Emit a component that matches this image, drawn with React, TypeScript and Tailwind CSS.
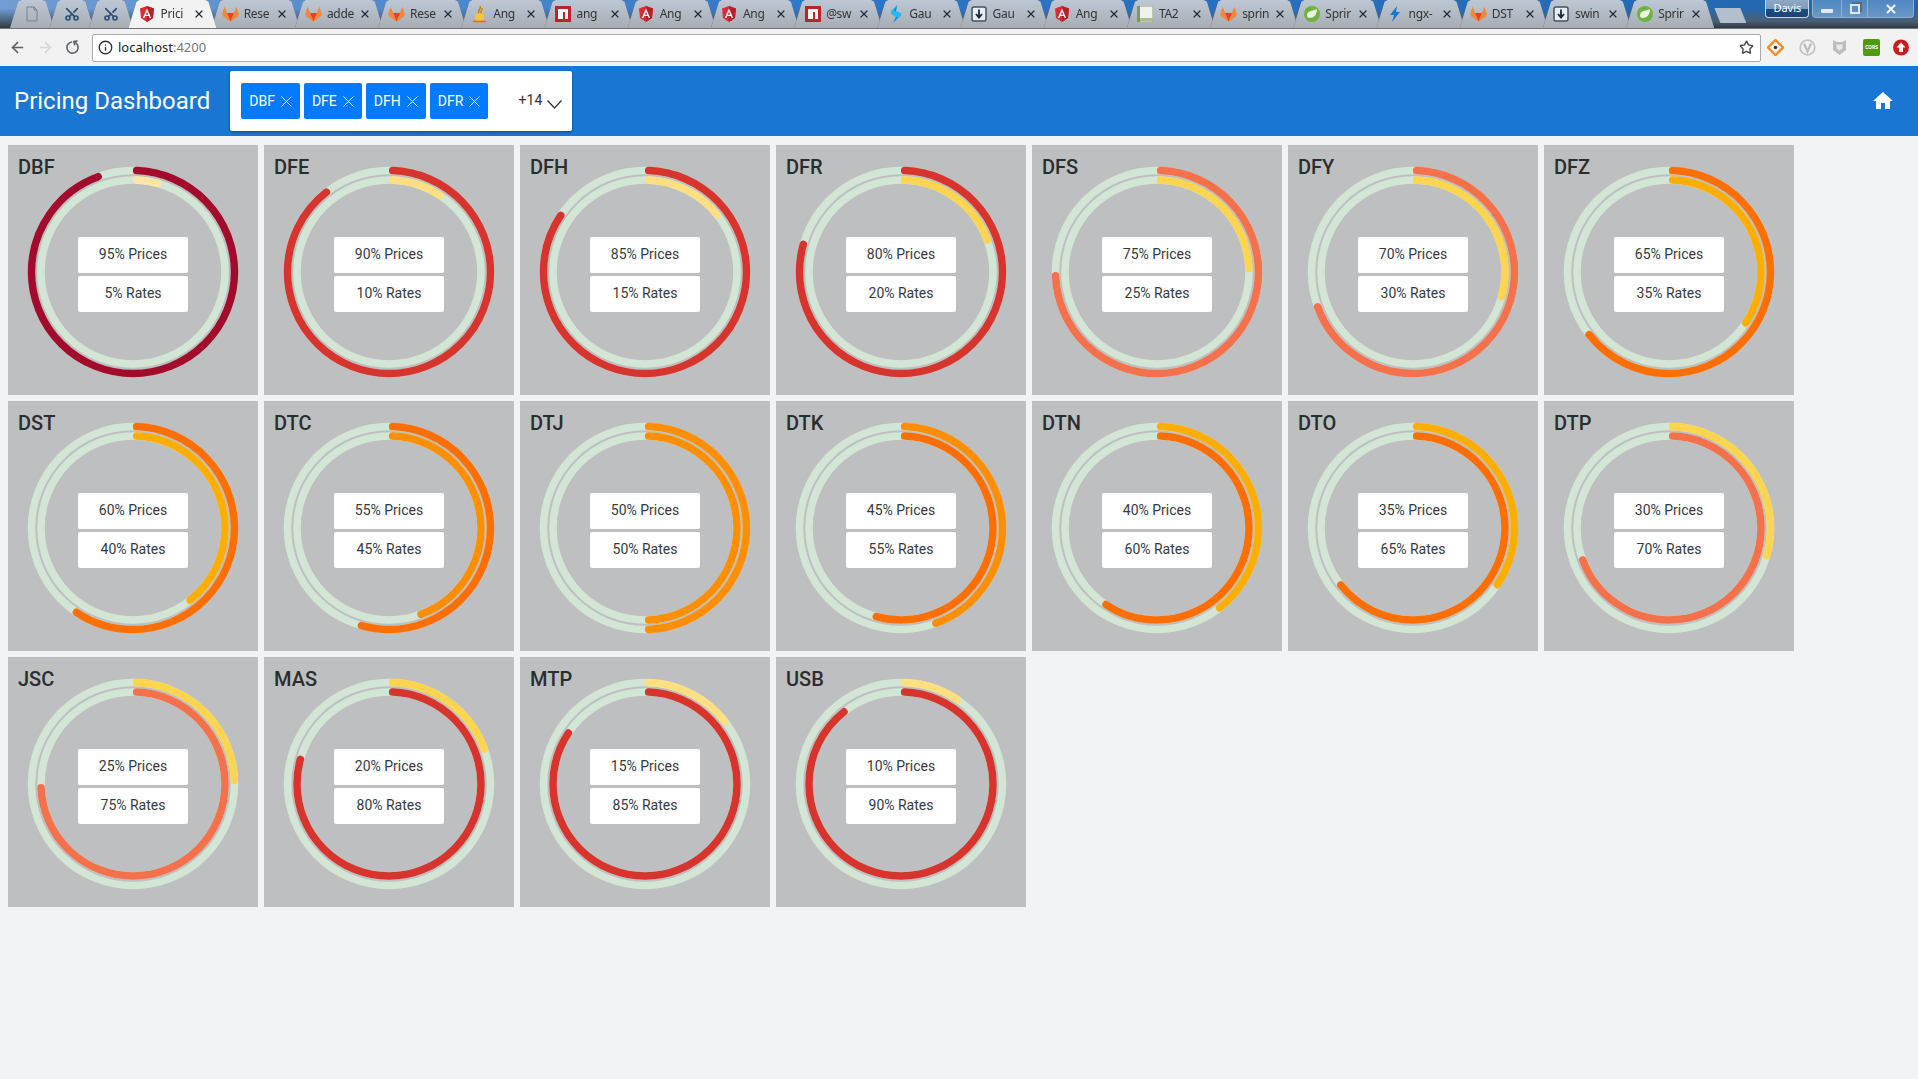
import { Scissors, X, ArrowLeft, ArrowRight, RotateCw, Star, Info } from "lucide-react";

type Gauge = { name: string; prices: number };

const gauges: Gauge[] = [
  { name: "DBF", prices: 95 },
  { name: "DFE", prices: 90 },
  { name: "DFH", prices: 85 },
  { name: "DFR", prices: 80 },
  { name: "DFS", prices: 75 },
  { name: "DFY", prices: 70 },
  { name: "DFZ", prices: 65 },
  { name: "DST", prices: 60 },
  { name: "DTC", prices: 55 },
  { name: "DTJ", prices: 50 },
  { name: "DTK", prices: 45 },
  { name: "DTN", prices: 40 },
  { name: "DTO", prices: 35 },
  { name: "DTP", prices: 30 },
  { name: "JSC", prices: 25 },
  { name: "MAS", prices: 20 },
  { name: "MTP", prices: 15 },
  { name: "USB", prices: 10 },
];

function colorFor(v: number) {
  if (v >= 95) return "#a20b2c";
  if (v >= 80) return "#d6342c";
  if (v >= 70) return "#f4714b";
  if (v >= 55) return "#ff6f00";
  if (v >= 45) return "#ff8f00";
  if (v >= 35) return "#ffae00";
  if (v >= 20) return "#ffd54f";
  if (v >= 10) return "#ffdf80";
  return "#ffe6a6";
}

function Ring({ r, value }: { r: number; value: number }) {
  // the round caps stay inside the arc's own range
  const cap = (3.75 / (2 * Math.PI * r)) * 100;
  return (
    <>
      <circle cx="110" cy="110" r={r} fill="none" stroke="#d3e5d4" strokeWidth="7.5" />
      <circle
        cx="110"
        cy="110"
        r={r}
        fill="none"
        stroke={colorFor(value)}
        strokeWidth="7.5"
        strokeLinecap="round"
        pathLength={100}
        strokeDasharray={`${value - 2 * cap} 100`}
        strokeDashoffset={-cap}
        transform="rotate(-90 110 110)"
      />
    </>
  );
}

function Card({ name, prices }: Gauge) {
  const rates = 100 - prices;
  return (
    <div className="grid h-[250px] w-[250px] bg-[#bebfc1]">
      <h2 className="[grid-area:1/1] self-start pl-[10px] pt-[10px] text-[20px] font-medium leading-[24px] text-[#2a2d30]">
        {name}
      </h2>
      <svg className="[grid-area:1/1] ml-[15px] mt-[17px]" width="220" height="220" viewBox="0 0 220 220">
        <Ring r={101.5} value={prices} />
        <Ring r={92} value={rates} />
      </svg>
      <div className="[grid-area:1/1] mx-auto mt-[92px] flex w-[110px] flex-col gap-[3px] self-start text-[14px] text-[#333a40]">
        <div className="flex h-9 items-center justify-center rounded-[2px] bg-white pb-[2px]">{prices}% Prices</div>
        <div className="flex h-9 items-center justify-center rounded-[2px] bg-white pb-[2px]">{rates}% Rates</div>
      </div>
    </div>
  );
}

function AngularIcon() {
  return (
    <svg width="16" height="16" viewBox="0 0 16 16">
      <path d="M8 0 1 2.500l1 9.500 6 4 6-4 1-9.500z" fill="#dd2c36" />
      <path d="M8 0v16l6-4 1-9.500z" fill="#b81f2c" />
      <path d="M8 2.500 3.800 12h1.600l.8-2h3.600l.8 2h1.600zM6.800 8.700 8 5.800l1.200 2.900z" fill="#fff" />
    </svg>
  );
}

function GitlabIcon() {
  return (
    <svg width="17" height="16" viewBox="0 0 17 16">
      <path d="M8.500 15.500 1 10 .5 8 2.500 1 5 7h7l2.500-6 2 7-.5 2z" fill="#e8743b" />
      <path d="M8.500 15.500 5 7h7z" fill="#e24329" />
      <path d="M8.500 15.500 1 10 .5 8 2.500 1 5 7zM8.500 15.500 16 10l.5-2-2-7L12 7z" fill="#f08a3a" />
    </svg>
  );
}

function NpmIcon() {
  return (
    <svg width="16" height="16" viewBox="0 0 16 16">
      <rect width="16" height="16" fill="#c12127" />
      <path d="M3 3h10v10h-3V6H8v7H3z" fill="#fff" />
    </svg>
  );
}

function SpringIcon() {
  return (
    <svg width="16" height="16" viewBox="0 0 16 16">
      <circle cx="8" cy="8" r="8" fill="#6db33f" />
      <path d="M13 3c0 6-3 9-8 9-1 0-2-1-2-3 0-4 5-4 10-6z" fill="#e9f5df" />
    </svg>
  );
}

function DownloadIcon() {
  return (
    <svg width="16" height="16" viewBox="0 0 16 16">
      <rect x="1" y="1" width="14" height="14" rx="2" fill="#e6edf4" stroke="#44525f" strokeWidth="1.5" />
      <path d="M8 3.500V11M5 8l3 3.500L11 8" fill="none" stroke="#1d2731" strokeWidth="1.8" />
    </svg>
  );
}

function BoltIcon({ color }: { color: string }) {
  return (
    <svg width="16" height="16" viewBox="0 0 16 16">
      <path d="M10 0 3 9h4l-2 7 8-10H9z" fill={color} />
    </svg>
  );
}

function GaugeLogo() {
  return (
    <svg width="16" height="18" viewBox="0 0 16 18">
      <path d="M9 0 3 6v3l5 3-3 6 8-7V8L8 6z" fill="#29b6f6" />
      <path d="M9 0 6 6h2zM8 12l-3 6 5-6z" fill="#0288d1" />
    </svg>
  );
}

function JavaIcon() {
  return (
    <svg width="16" height="17" viewBox="0 0 16 17">
      <path d="M8 0c2 3-3 4-1 7M10 2c1 2-2 3-1 5" fill="none" stroke="#e76f00" strokeWidth="1.3" />
      <path d="M3 8h9v4c0 2-2 3-4.500 3S3 14 3 12z" fill="#f4c542" />
      <path d="M1 15.500h13" stroke="#e76f00" strokeWidth="1.3" />
    </svg>
  );
}

function ThumbIcon() {
  return (
    <svg width="16" height="16" viewBox="0 0 16 16">
      <rect width="16" height="16" fill="#eef2e8" stroke="#8a9a7d" />
      <rect width="3" height="16" fill="#7c9a5c" />
      <rect x="3" y="12" width="13" height="3" fill="#a9c08c" />
    </svg>
  );
}

// labels hold only the letters the narrow tabs leave visible
const tabs: { label: string; icon: React.ReactNode; active?: boolean }[] = [
  { label: "Prici", icon: <AngularIcon />, active: true },
  { label: "Rese", icon: <GitlabIcon /> },
  { label: "adde", icon: <GitlabIcon /> },
  { label: "Rese", icon: <GitlabIcon /> },
  { label: "Ang", icon: <JavaIcon /> },
  { label: "ang", icon: <NpmIcon /> },
  { label: "Ang", icon: <AngularIcon /> },
  { label: "Ang", icon: <AngularIcon /> },
  { label: "@sw", icon: <NpmIcon /> },
  { label: "Gau", icon: <GaugeLogo /> },
  { label: "Gau", icon: <DownloadIcon /> },
  { label: "Ang", icon: <AngularIcon /> },
  { label: "TA2", icon: <ThumbIcon /> },
  { label: "sprin", icon: <GitlabIcon /> },
  { label: "Sprir", icon: <SpringIcon /> },
  { label: "ngx-", icon: <BoltIcon color="#1976d2" /> },
  { label: "DST", icon: <GitlabIcon /> },
  { label: "swin", icon: <DownloadIcon /> },
  { label: "Sprir", icon: <SpringIcon /> },
];

function Tab({ label, icon, active }: { label: string; icon: React.ReactNode; active?: boolean }) {
  return (
    <div className={`-mr-[10.8px] h-[28px] w-[94px] shrink-0 [filter:drop-shadow(0_0_0.6px_#4d5866)] ${active ? "relative z-10" : ""}`}>
      <div
        className={`flex h-full items-center pl-[13px] pr-[15px] [clip-path:polygon(0_100%,3px_100%,11px_6%,14px_0,80px_0,83px_6%,91px_100%,94px_100%)] ${
          active ? "bg-[#f2f2f2]" : "bg-gradient-to-b from-[#bdc8d5] to-[#a7adb3]"
        }`}
      >
        <span className="flex w-[17px] shrink-0 justify-center">{icon}</span>
        <span className="ml-[5px] w-[27px] whitespace-nowrap text-[12px] tracking-[-0.3px] text-[#333]">{label}</span>
        <X className="ml-[5px] shrink-0 text-[#1f2a33]" size={12} strokeWidth={2.4} />
      </div>
    </div>
  );
}

function PinnedTab({ children }: { children: React.ReactNode }) {
  return (
    <div className="-mr-[10.5px] h-[28px] w-[50px] shrink-0 [filter:drop-shadow(0_0_0.6px_#4d5866)]">
      <div className="flex h-full items-center justify-center bg-gradient-to-b from-[#bdc8d5] to-[#a7adb3] [clip-path:polygon(0_100%,3px_100%,11px_6%,14px_0,36px_0,39px_6%,47px_100%,50px_100%)]">
        {children}
      </div>
    </div>
  );
}

function BrowserChrome() {
  return (
    <div className="font-['Noto_Sans',sans-serif]">
      <div className="flex h-[29px] items-start border-b border-[#6f7479] bg-[linear-gradient(180deg,transparent_30%,#4a5f76_75%,#30383f_100%),linear-gradient(90deg,#6f9dd4,#2c74c6_45%,#2266ad)] pl-[7px]">
        <PinnedTab>
          <svg width="14" height="16" viewBox="0 0 14 16" fill="none" stroke="#7c7f83">
            <path d="M2 1h7l3 3v11H2zM9 1v3h3" />
          </svg>
        </PinnedTab>
        <PinnedTab>
          <Scissors className="-rotate-90 text-[#2b4d74]" size={16} strokeWidth={2.4} />
        </PinnedTab>
        <PinnedTab>
          <Scissors className="-rotate-90 text-[#2b4d74]" size={16} strokeWidth={2.4} />
        </PinnedTab>
        {tabs.map((t, i) => (
          <Tab key={i} {...t} />
        ))}
        <div className="ml-[8px] mt-[8px] h-[15px] w-[32px] bg-[#b3bfcd] [clip-path:polygon(0_0,26px_0,100%_100%,6px_100%)]" />
        <div className="ml-[19px] flex h-[18px] w-[44px] items-center justify-center rounded-b-[4px] border border-t-0 border-[#c6d4e4] bg-[linear-gradient(180deg,#8ea9c6_0%,#7f9cbc_50%,#1f4d80_55%,#1c4473_100%)] text-[11px] text-white">
          Davis
        </div>
        <div className="ml-[3px] flex h-[18px] w-[102px] rounded-b-[4px] border border-t-0 border-[#8fb0d2] bg-gradient-to-b from-[#4f87c2] to-[#6a96c6] text-white">
          <div className="flex w-[29px] items-center justify-center border-r border-[#8fb0d2]">
            <div className="mt-[5px] h-[4px] w-[12px] rounded-[1px] bg-[#e4e9ee]" />
          </div>
          <div className="flex w-[26px] items-center justify-center border-r border-[#8fb0d2]">
            <div className="mt-[1px] h-[10px] w-[10px] border-2 border-[#dfe6ee] shadow-[2px_-2px_0_0_#5a6b7c]" />
          </div>
          <div className="flex flex-1 items-center justify-center">
            <X size={14} strokeWidth={3.5} className="text-[#f0f3f6]" />
          </div>
        </div>
      </div>
      <div className="flex h-[37px] items-center bg-[#f2f2f2] pl-[9px] pr-[9px]">
        <ArrowLeft className="text-[#5f6368]" size={17} strokeWidth={2.4} />
        <ArrowRight className="ml-[11px] text-[#d6d6d6]" size={17} strokeWidth={2.4} />
        <RotateCw className="ml-[11px] -scale-x-100 rotate-[80deg] text-[#5f6368]" size={15} strokeWidth={2.6} />
        <div className="ml-[12px] flex h-[28px] flex-1 items-center rounded-[2px] border border-[#a9a9a9] bg-white pl-[5px] pr-[6px] text-[13px]">
          <Info size={15} strokeWidth={2.2} className="text-[#333]" />
          <span className="ml-[5px] text-[#222]">localhost</span>
          <span className="text-[#777]">:4200</span>
          <Star className="ml-auto text-[#444]" size={15} strokeWidth={2.2} />
        </div>
        <div className="ml-[6px] flex items-center">
          <svg width="17" height="17" viewBox="0 0 17 17">
            <path d="M8.500 1 16 8.500 8.500 16 1 8.500z" fill="none" stroke="#f28c28" strokeWidth="2.4" />
            <circle cx="8.500" cy="8.500" r="1.8" fill="#333" />
          </svg>
          <svg className="ml-[15px]" width="17" height="17" viewBox="0 0 17 17">
            <circle cx="8.500" cy="8.500" r="7.3" fill="none" stroke="#c4c4c4" strokeWidth="1.8" />
            <path d="M5 4.500l3.500 8 3.500-8" fill="none" stroke="#bdbdbd" strokeWidth="2.2" />
          </svg>
          <svg className="ml-[16px]" width="15" height="17" viewBox="0 0 15 17">
            <path d="M1 1l3.500 2h6L14 1v10l-6.500 5L1 11z" fill="#bdbdbd" />
            <path d="M4.500 5.500h6v4l-3 2-3-2z" fill="#e8e8e8" />
          </svg>
          <div className="ml-[16px] flex h-[17px] w-[17px] items-center justify-center overflow-visible rounded-[2px] bg-[#4f9a0d] text-[5px] font-bold text-white">
            CORS
          </div>
          <svg className="ml-[13px]" width="16" height="17" viewBox="0 0 16 17">
            <circle cx="8" cy="8.500" r="8" fill="#c91c1c" />
            <path d="M8 3.500 12.500 8.500H10V13H6V8.500H3.500z" fill="#fff" />
          </svg>
        </div>
      </div>
    </div>
  );
}

export default function App() {
  return (
    <div className="min-h-[1079px] bg-[#f1f3f5] font-['Roboto',sans-serif]">
      <BrowserChrome />
      <header className="flex h-[70px] items-center bg-[#1976d2] pl-[14px] pr-[23px] text-white">
        <h1 className="text-[24px] font-normal">Pricing Dashboard</h1>
        <div className="ml-[20px] flex h-[60px] w-[342px] items-center rounded-[2px] bg-white pl-[11px] pr-[10px] shadow-[0_1px_3px_rgba(0,0,0,0.4)]">
          <div className="flex gap-1">
            {["DBF", "DFE", "DFH", "DFR"].map((c) => (
              <span key={c} className="flex h-9 items-center gap-[6px] rounded-[2px] bg-[#007bff] px-2 text-[14px] text-white">
                {c}
                <svg width="11" height="11" viewBox="0 0 11 11" fill="none" stroke="#fff" strokeWidth="1">
                  <path d="M.5.500l10 10M10.500.500l-10 10" />
                </svg>
              </span>
            ))}
          </div>
          <span className="ml-auto pb-[2px] text-[14px] text-[#333]">+14</span>
          <svg className="ml-[5px] mt-[6px]" width="15" height="9" viewBox="0 0 15 9" fill="none" stroke="#333" strokeWidth="1.2">
            <path d="M.5.500 7.500 8 14.500.500" />
          </svg>
        </div>
        <svg className="ml-auto" width="24" height="24" viewBox="0 0 24 24" fill="#fff">
          <path d="M10 20v-6h4v6h5v-8h3L12 3 2 12h3v8z" />
        </svg>
      </header>
      <main className="flex flex-wrap gap-[6px] pl-2 pt-[9px]">
        {gauges.map((g) => (
          <Card key={g.name} {...g} />
        ))}
      </main>
    </div>
  );
}
